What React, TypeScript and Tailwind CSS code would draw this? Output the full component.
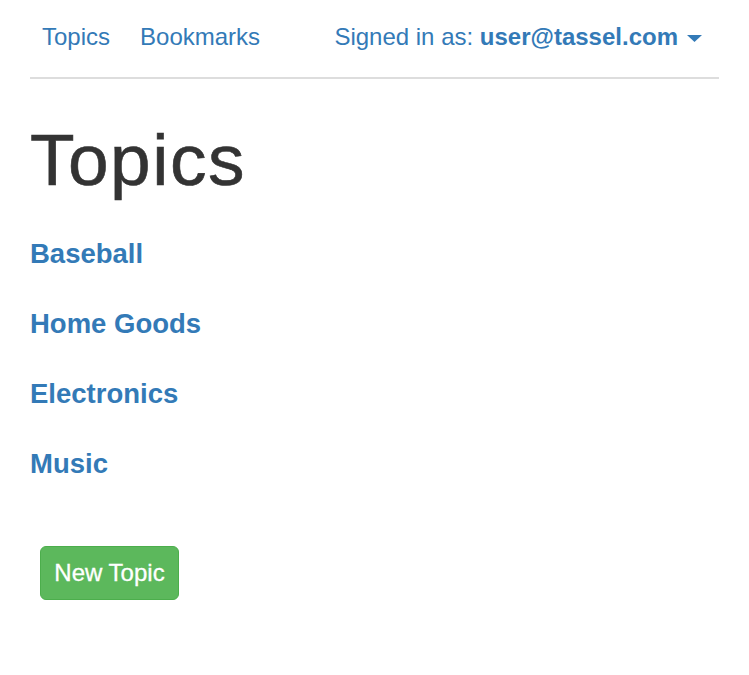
import React from "react";

const topics = ["Baseball", "Home Goods", "Electronics", "Music"];

const App: React.FC = () => {
  return (
    <div
      className="min-h-screen w-full bg-white px-[30px] text-[#333]"
      style={{ fontFamily: '"Liberation Sans", Arial, sans-serif' }}
    >
      {/* top nav */}
      <nav className="flex h-[79px] items-start border-b-2 border-[#ddd] pt-[25px] text-[24px] leading-[24px] text-[#337ab7]">
        <ul className="m-0 flex list-none gap-[30px] p-0 pl-[12px]">
          <li>
            <a href="#">Topics</a>
          </li>
          <li>
            <a href="#">Bookmarks</a>
          </li>
        </ul>
        <div className="ml-auto flex items-center pr-[17px]">
          <span>
            Signed in as: <b className="font-bold">user@tassel.com</b>
          </span>
          <svg width="15" height="8" viewBox="0 0 15 8" className="ml-[9px] mt-[3px]">
            <polygon points="0,0 15,0 7.5,7" fill="#337ab7" />
          </svg>
        </div>
      </nav>

      <h1 className="mt-[41px] text-[73px] font-normal leading-[79px] tracking-[1.5px] text-[#333] [-webkit-text-stroke:0.6px_#333]">
        Topics
      </h1>

      <div className="mt-[40px] flex flex-col gap-[40px]">
        {topics.map((t) => (
          <a
            key={t}
            href="#"
            className="block text-[27.5px] font-bold leading-[30px] text-[#337ab7]"
          >
            {t}
          </a>
        ))}
      </div>

      <div className="mt-[67px] pl-[10px]">
        <button className="flex h-[54px] w-[139px] items-center justify-center rounded-[6px] border border-[#4cae4c] bg-[#5cb85c] text-[24px] text-white [-webkit-text-stroke:0.3px_#fff]">
          New Topic
        </button>
      </div>
    </div>
  );
};

export default App;
